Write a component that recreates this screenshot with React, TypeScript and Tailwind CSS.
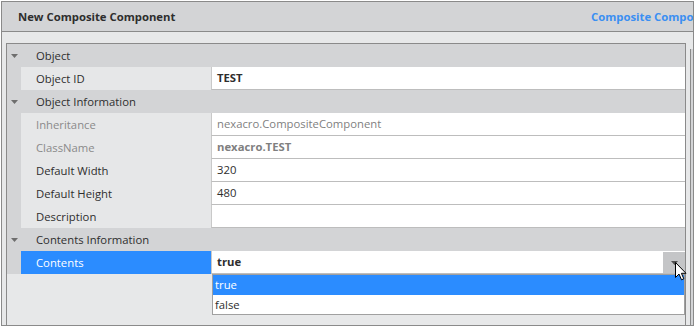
import React from "react";

const font = { fontFamily: '"Open Sans", "Noto Sans", sans-serif' };

function Arrow() {
  return (
    <svg width="7" height="4" viewBox="0 0 7 4" className="block">
      <path d="M0 0 L7 0 L3.5 4 Z" fill="#6e6e6e" />
    </svg>
  );
}

function Header({ label }: { label: string }) {
  return (
    <div className="flex h-[23px] bg-[#d3d4d6]">
      <div className="flex w-[14px] items-center justify-center pt-[1px]">
        <Arrow />
      </div>
      <div className="flex flex-1 items-center pl-[15px] pt-px text-[11.3px] text-[#2e2e2e]">{label}</div>
    </div>
  );
}

function Item({
  name,
  value,
  disabled,
  bold,
  selected,
}: {
  name: string;
  value?: string;
  disabled?: boolean;
  bold?: boolean;
  selected?: boolean;
}) {
  return (
    <div className="flex h-[23px]">
      <div className="w-[14px] bg-[#d3d4d6]" />
      <div
        className={
          selected
            ? "flex w-[190px] items-center bg-[#2b8cff] pl-[15px] pt-px text-[11.3px] text-white"
            : disabled
            ? "flex w-[190px] items-center bg-[#e6e7e8] pl-[15px] pt-px text-[11.3px] text-[#8a8a8a]"
            : "flex w-[190px] items-center bg-[#e6e7e8] pl-[15px] pt-px text-[11.3px] text-[#2e2e2e]"
        }
      >
        {name}
      </div>
      <div
        className={
          "flex flex-1 items-center border-b border-l border-b-[#bdbdbd] border-l-[#c9c9c9] bg-white pl-[5px] pt-px text-[11.3px] " +
          (disabled ? "text-[#7f7f7f] " : "text-[#2e2e2e] ") +
          (bold ? "font-bold" : "")
        }
      >
        {value}
      </div>
    </div>
  );
}

export default function App() {
  return (
    <div className="relative h-[327px] w-[695px] overflow-hidden bg-white" style={font}>
      <div className="ml-px mt-px flex h-[325px] w-[693px] flex-col border border-[#8a8a8a] bg-[#e7e8e9]">
        <div className="flex h-[30px] shrink-0 items-center overflow-hidden whitespace-nowrap border-b border-[#8a8a8a] bg-[#d3d4d6] pl-[16px] pt-[2px]">
          <span className="w-[573px] shrink-0 text-[11.3px] font-bold text-[#2e2e2e]">New Composite Component</span>
          <span className="shrink-0 text-[11.3px] font-bold text-[#3b8ff2]">Composite Component</span>
        </div>
        <div className="flex flex-1 pl-[4px] pt-[11px]">
          <div className="relative flex w-[680px] flex-col border-l border-r border-t border-[#8a8a8a]">
            <Header label="Object" />
            <Item name="Object ID" value="TEST" bold />
            <Header label="Object Information" />
            <Item name="Inheritance" value="nexacro.CompositeComponent" disabled />
            <Item name="ClassName" value="nexacro.TEST" disabled bold />
            <Item name="Default Width" value="320" />
            <Item name="Default Height" value="480" />
            <Item name="Description" value="" />
            <Header label="Contents Information" />
            <div className="relative">
              <Item name="Contents" value="true" bold selected />
              <div className="absolute right-0 top-[1px] flex h-[21px] w-[22px] items-center justify-center bg-[#c4c5c7]">
                <svg width="7" height="4" viewBox="0 0 7 4">
                  <path d="M0 0 L7 0 L3.5 4 Z" fill="#505050" />
                </svg>
              </div>
            </div>
            <div className="absolute left-[205px] top-[230px] w-[473px] border border-[#a0a0a0] bg-white text-[11.3px]">
              <div className="flex h-[20px] items-center bg-[#2b8cff] pl-[2px] pt-px text-white">true</div>
              <div className="flex h-[19px] items-center pl-[2px] pt-px text-[#2e2e2e]">false</div>
            </div>
          </div>
          <div className="ml-[4px] mt-[6px] w-px bg-[#8a8a8a]" />
          <div className="mt-[6px] w-[2px] bg-[#d3d4d6]" />
        </div>
      </div>
      <svg
        className="absolute left-[675px] top-[262px]"
        width="12"
        height="19"
        viewBox="0 0 12 19"
      >
        <path
          d="M0.5 0.5 L0.5 15.5 L4 12 L6.5 17.8 L8.8 16.8 L6.4 11.3 L11 11.3 Z"
          fill="white"
          stroke="black"
          strokeWidth="1"
          strokeLinejoin="miter"
        />
      </svg>
    </div>
  );
}
